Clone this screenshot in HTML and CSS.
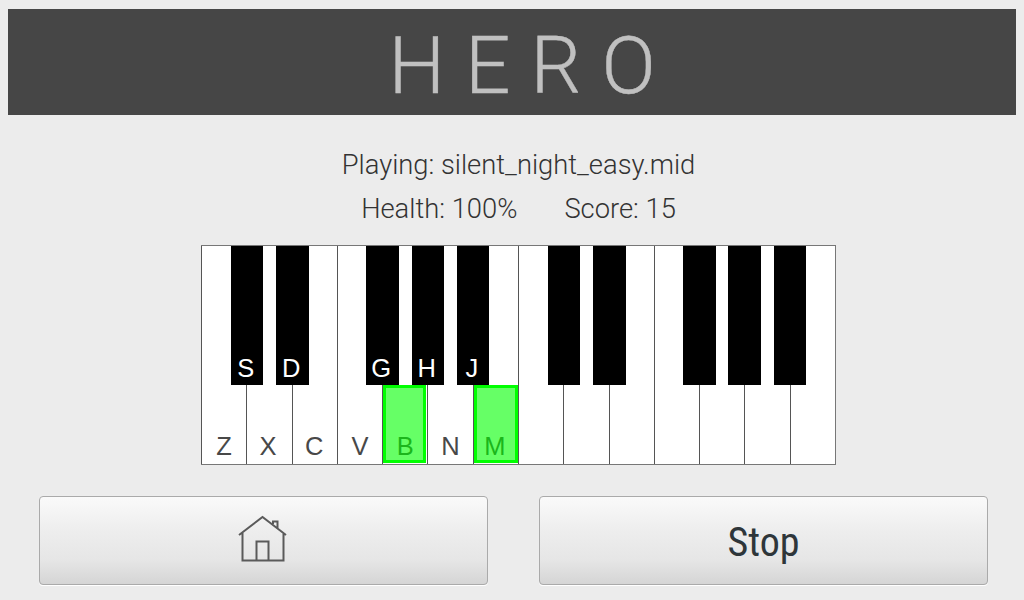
FILE: index.html
```html
<!DOCTYPE html>
<html lang="en">
<head>
<meta charset="utf-8">
<title>Hero</title>
<link rel="stylesheet" href="styles.css">
</head>
<body>
<header class="banner"><h1 class="title">HERO</h1></header>
<main class="game">
  <p class="status"><span class="song">Playing: silent_night_easy.mid</span></p>
  <p class="status stats"><span class="health">Health: 100%</span><span class="score">Score: 15</span></p>
  <div class="piano">
    <div class="white-keys">
      <div class="key">Z</div><div class="key x">X</div><div class="key c">C</div><div class="key">V</div>
      <div class="key active">B</div><div class="key">N</div><div class="key active m">M</div>
      <div class="key"></div><div class="key"></div><div class="key"></div><div class="key"></div>
      <div class="key"></div><div class="key"></div><div class="key"></div>
    </div>
    <div class="black s">S</div><div class="black d">D</div>
    <div class="black g">G</div><div class="black h">H</div><div class="black j">J</div>
    <div class="black s2"></div><div class="black d2"></div>
    <div class="black g2"></div><div class="black h2"></div><div class="black j2"></div>
  </div>
</main>
<nav class="controls">
  <button class="button" aria-label="Home">
    <svg class="home" viewBox="0 0 50 50" width="50" height="50">
      <path d="M2 23 25.500 5 49 23M5.500 21V48.500H46.500V21M19.500 48.500V29.500H31.500V48.500M36 12V9.500H40.500V16"/>
    </svg>
  </button>
  <button class="button"><span class="label">Stop</span></button>
</nav>
</body>
</html>
```
FILE: styles.css
```css
*, *::after { box-sizing: border-box; }
body {
  margin: 0;
  padding: 9px 8px 0;
  height: 600px;
  overflow: hidden;
  background: #ececec;
  color: #333;
  font-family: Roboto, sans-serif;
}
.banner { height: 106px; background: #464646; text-align: center; }
.title {
  margin: 0;
  padding-left: 40px;
  font-size: 80px;
  line-height: 114px;
  font-weight: 300;
  letter-spacing: 20px;
  color: #c0c0c0;
  -webkit-text-stroke: .4px #c0c0c0;
}
.game { display: flex; flex-direction: column; align-items: center; padding: 28px 0 0 13px; }
.status { margin: 0; height: 44px; line-height: 44px; font-size: 27.35px; font-weight: 300; white-space: nowrap; }
.stats { display: flex; gap: 47px; }
.piano {
  position: relative;
  width: 635px;
  height: 220px;
  margin: 14px 0 0;
  border: 1px solid #777;
  background: #fff;
  font: 25.5px/32px "Liberation Sans", Arial, sans-serif;
}
.white-keys { display: grid; grid-template-columns: repeat(14, 45.29px); height: 218px; margin-left: -1px; }
.key { border-left: 1px solid #555; padding: 184px 0 0; text-align: center; color: #484848; }
.key.x { padding-right: 3px; }
.key.c { padding-right: 1px; }
.key.m { padding-right: 2px; }
.key.active { position: relative; }
.key.active::after {
  content: "";
  position: absolute;
  left: 0;
  top: 139px;
  width: 43px;
  height: 78px;
  border: 3px solid #0f0;
  background: rgba(0, 255, 0, .6);
}
.key.m::after { width: 44px; }
.black {
  position: absolute;
  top: 0;
  width: 32.500px;
  height: 138.500px;
  padding: 106px 2px 0 0;
  text-align: center;
  background: #000;
  color: #fff;
}
.s { left: 28.500px; } .d { left: 74px; }
.g { left: 164px; } .h { left: 209.500px; } .j { left: 254.500px; }
.s2 { left: 345.500px; } .d2 { left: 391px; }
.g2 { left: 481px; } .h2 { left: 526px; } .j2 { left: 571.500px; }
.controls { display: grid; grid-template-columns: 449px 449px; gap: 51px; padding: 31px 0 0 31px; }
.button {
  display: flex;
  align-items: center;
  justify-content: center;
  height: 89px;
  padding: 0;
  border: 1px solid #aaa;
  border-radius: 4px;
  background: linear-gradient(#fafafa, #ededed 40%, #e6e6e6 72%, #d5d5d5);
  box-shadow: 0 1px 0 #fff, 0 0 1px #fff;
}
.home { margin: 0 4px 7px 0; fill: none; stroke: #5a5a5a; stroke-width: 2; }
.label {
  padding-top: 5px;
  font: 400 40px/48px "Roboto Condensed", Roboto, sans-serif;
  font-stretch: 75%;
  color: #2e363a;
}
```
